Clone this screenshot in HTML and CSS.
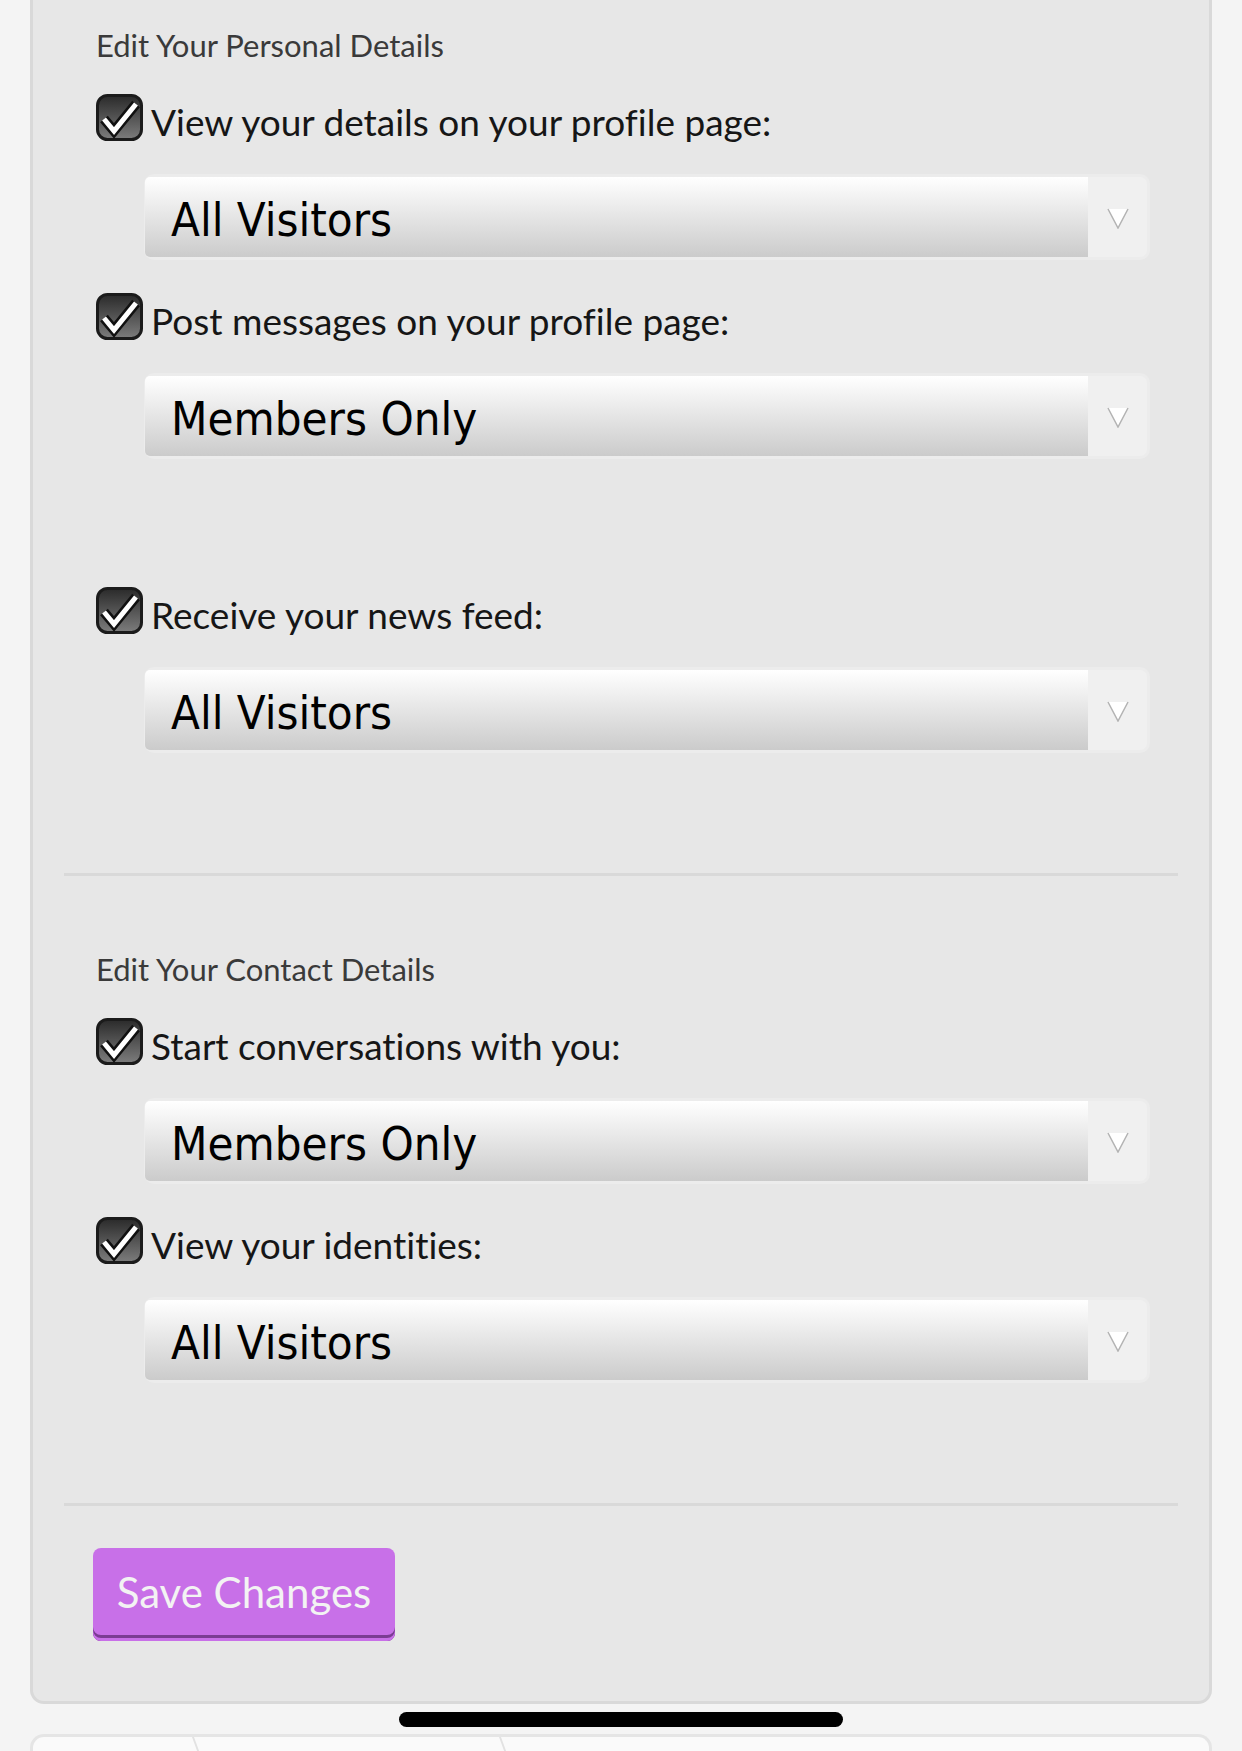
FILE: index.html
```html
<!DOCTYPE html>
<html lang="en">
<head>
  <meta charset="UTF-8" />
  <title>Privacy Settings</title>
  <link rel="stylesheet" href="styles.css">
</head>
<body>
  <!-- shared gradient for the checkbox glyphs -->
  <svg class="svg-defs" aria-hidden="true">
    <defs>
      <linearGradient id="box-fill" x1="0" y1="0" x2="0" y2="1">
        <stop offset="0" stop-color="#2a2a2a"/>
        <stop offset="1" stop-color="#7d7d7d"/>
      </linearGradient>
    </defs>
  </svg>

  <form class="privacy-panel">
    <!-- personal details -->
    <div class="form-section">
      <h3 class="section-title">Edit Your Personal Details</h3>

      <div class="field">
        <label class="check-row">
          <svg class="check" viewBox="0 0 47 47"><rect x="1.5" y="1.5" width="44" height="44" rx="10" fill="url(#box-fill)" stroke="#1b1b1b" stroke-width="3"/><path d="M8 25 L18 37 L40 10" fill="none" stroke="#111" stroke-width="10"/><path d="M8 25 L18 37 L40 10" fill="none" stroke="#fff" stroke-width="5"/></svg>
          <span class="check-text">View your details on your profile page:</span>
        </label>
        <div class="select-box">
          <span class="select-value">All Visitors</span>
          <span class="select-arrow"><svg viewBox="0 0 22 21"><path d="M1 1 H21 L11 20 Z" fill="#fff"/><path d="M1 1 L11 20 L21 1" fill="none" stroke="#b3b3b3" stroke-width="1.5"/></svg></span>
        </div>
      </div>

      <div class="field">
        <label class="check-row">
          <svg class="check" viewBox="0 0 47 47"><rect x="1.5" y="1.5" width="44" height="44" rx="10" fill="url(#box-fill)" stroke="#1b1b1b" stroke-width="3"/><path d="M8 25 L18 37 L40 10" fill="none" stroke="#111" stroke-width="10"/><path d="M8 25 L18 37 L40 10" fill="none" stroke="#fff" stroke-width="5"/></svg>
          <span class="check-text">Post messages on your profile page:</span>
        </label>
        <div class="select-box">
          <span class="select-value">Members Only</span>
          <span class="select-arrow"><svg viewBox="0 0 22 21"><path d="M1 1 H21 L11 20 Z" fill="#fff"/><path d="M1 1 L11 20 L21 1" fill="none" stroke="#b3b3b3" stroke-width="1.5"/></svg></span>
        </div>
      </div>

      <div class="field field-spaced">
        <label class="check-row">
          <svg class="check" viewBox="0 0 47 47"><rect x="1.5" y="1.5" width="44" height="44" rx="10" fill="url(#box-fill)" stroke="#1b1b1b" stroke-width="3"/><path d="M8 25 L18 37 L40 10" fill="none" stroke="#111" stroke-width="10"/><path d="M8 25 L18 37 L40 10" fill="none" stroke="#fff" stroke-width="5"/></svg>
          <span class="check-text">Receive your news feed:</span>
        </label>
        <div class="select-box">
          <span class="select-value">All Visitors</span>
          <span class="select-arrow"><svg viewBox="0 0 22 21"><path d="M1 1 H21 L11 20 Z" fill="#fff"/><path d="M1 1 L11 20 L21 1" fill="none" stroke="#b3b3b3" stroke-width="1.5"/></svg></span>
        </div>
      </div>
    </div>

    <!-- contact details -->
    <div class="form-section">
      <h3 class="section-title">Edit Your Contact Details</h3>

      <div class="field">
        <label class="check-row">
          <svg class="check" viewBox="0 0 47 47"><rect x="1.5" y="1.5" width="44" height="44" rx="10" fill="url(#box-fill)" stroke="#1b1b1b" stroke-width="3"/><path d="M8 25 L18 37 L40 10" fill="none" stroke="#111" stroke-width="10"/><path d="M8 25 L18 37 L40 10" fill="none" stroke="#fff" stroke-width="5"/></svg>
          <span class="check-text">Start conversations with you:</span>
        </label>
        <div class="select-box">
          <span class="select-value">Members Only</span>
          <span class="select-arrow"><svg viewBox="0 0 22 21"><path d="M1 1 H21 L11 20 Z" fill="#fff"/><path d="M1 1 L11 20 L21 1" fill="none" stroke="#b3b3b3" stroke-width="1.5"/></svg></span>
        </div>
      </div>

      <div class="field">
        <label class="check-row">
          <svg class="check" viewBox="0 0 47 47"><rect x="1.5" y="1.5" width="44" height="44" rx="10" fill="url(#box-fill)" stroke="#1b1b1b" stroke-width="3"/><path d="M8 25 L18 37 L40 10" fill="none" stroke="#111" stroke-width="10"/><path d="M8 25 L18 37 L40 10" fill="none" stroke="#fff" stroke-width="5"/></svg>
          <span class="check-text">View your identities:</span>
        </label>
        <div class="select-box">
          <span class="select-value">All Visitors</span>
          <span class="select-arrow"><svg viewBox="0 0 22 21"><path d="M1 1 H21 L11 20 Z" fill="#fff"/><path d="M1 1 L11 20 L21 1" fill="none" stroke="#b3b3b3" stroke-width="1.5"/></svg></span>
        </div>
      </div>
    </div>

    <div class="form-actions">
      <button type="button" class="save-btn">Save Changes</button>
    </div>
  </form>

  <!-- bottom tab strip -->
  <div class="tab-strip">
    <div class="tab tab-first"></div>
    <div class="tab tab-second"></div>
    <div class="tab tab-rest"></div>
  </div>

  <div class="home-bar"></div>
</body>
</html>
```

FILE: styles.css
```css
html, body {
  margin: 0;
  padding: 0;
  background: #f4f4f4;
  font-family: Lato, "Open Sans", sans-serif;
  font-variant-ligatures: none;
  overflow: hidden;
}

.svg-defs {
  position: absolute;
  width: 0;
  height: 0;
}

/* panel */
.privacy-panel {
  margin: 0 30px;
  padding: 25px 31px 0;
  background: #e7e7e7;
  border: 3px solid #d9d9d9;
  border-top: none;
  border-radius: 0 0 14px 14px;
}

.form-section {
  padding: 0 0 120px 32px;
  border-bottom: 3px solid #d9d9d9;
}
.form-section + .form-section {
  padding-top: 73px;
}

.section-title {
  margin: 0;
  font-size: 31px;
  line-height: 40px;
  font-weight: normal;
  color: #3a3a3a;
}

/* checkbox + select pairs */
.field { margin-top: 33px; }
.section-title + .field { margin-top: 29px; }
.field-spaced { margin-top: 128px; }

.check-row {
  display: flex;
  align-items: flex-start;
  gap: 8px;
  height: 47px;
}
.check {
  width: 47px;
  height: 47px;
  flex: 0 0 47px;
}
.check-text {
  padding-top: 4px;
  font-size: 37px;
  line-height: 47px;
  color: #161616;
  white-space: nowrap;
}

.select-box {
  display: flex;
  height: 80px;
  margin: 33px 28px 0 48px;
  border: 3px solid #ececec;
  border-left-width: 1px;
  border-radius: 10px;
  background: #f0f0f0;
}
.select-value {
  flex: 1;
  height: 80px;
  box-sizing: border-box;
  padding: 6px 0 0 26px;
  line-height: 74px;
  font-family: "DejaVu Sans Condensed", "DejaVu Sans", sans-serif;
  font-stretch: condensed;
  font-size: 47px;
  color: #000;
  background: linear-gradient(#ffffff, #cbcbcb);
  border-radius: 5px 0 0 5px;
}
.select-arrow {
  width: 59px;
  display: flex;
  align-items: center;
  justify-content: center;
}
.select-arrow svg {
  width: 22px;
  height: 21px;
  margin-top: 2px;
}

/* save button */
.form-actions {
  padding: 42px 0 60px 29px;
}
.save-btn {
  width: 302px;
  height: 93px;
  padding: 0 0 4px;
  border: none;
  border-radius: 8px;
  background: #c870e8;
  color: #f3f3f3;
  font-family: Lato, "Open Sans", sans-serif;
  font-variant-ligatures: none;
  font-size: 42px;
  line-height: 89px;
  box-shadow: inset 0 -3px 0 #c870e8, inset 0 -6px 0 #7b3c93;
}

/* tab strip under the panel */
.tab-strip {
  display: flex;
  height: 80px;
  margin: 30px 30px 0;
  background: #fafafa;
  border: 3px solid #e5e5e5;
  border-bottom: none;
  border-radius: 14px 14px 0 0;
}
.tab-first { width: 159px; }
.tab-second { width: 307px; }
.tab-rest { flex: 1; }
.tab + .tab::before {
  content: "";
  display: block;
  width: 2px;
  height: 40px;
  background: #e2e2e2;
  transform: skewX(20deg);
  transform-origin: top left;
}

.home-bar {
  position: fixed;
  left: 50%;
  bottom: 24px;
  width: 444px;
  height: 15px;
  margin-left: -222px;
  background: #000;
  border-radius: 8px;
}
```
